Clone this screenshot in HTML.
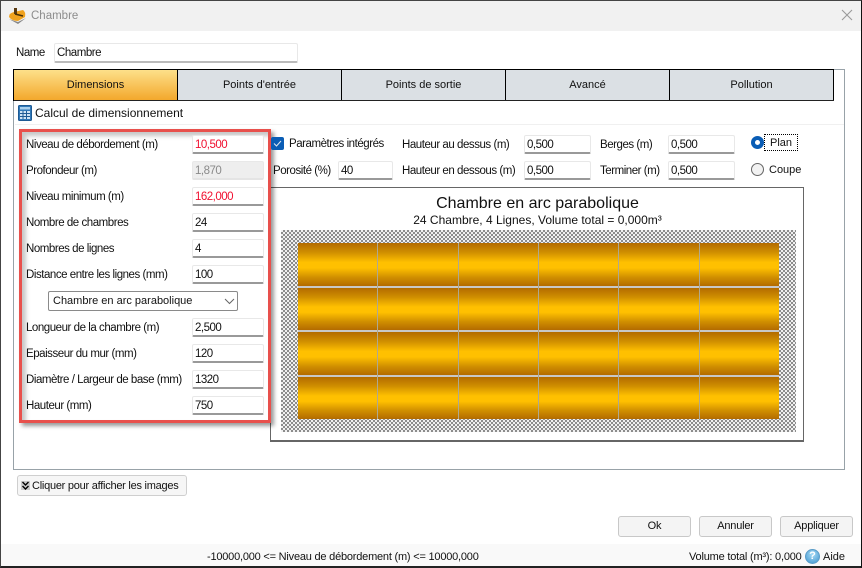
<!DOCTYPE html>
<html><head><meta charset="utf-8">
<style>
html,body{margin:0;padding:0;background:#fff;}
#w{position:relative;width:862px;height:568px;overflow:hidden;background:#fff;font-family:"Liberation Sans",sans-serif;font-size:11px;color:#111;}
#w div,#w span.a{position:absolute;box-sizing:border-box;white-space:nowrap;}
.l{height:16px;line-height:16px;font-size:11.5px;letter-spacing:-.46px;}
.i{width:72px;height:19px;background:#fff;border:1px solid #e8e8e8;border-bottom:2px solid #999;border-radius:2px;line-height:18px;padding-left:2px;font-size:11.5px;letter-spacing:-.5px;}
.r{color:#f01030;}
.t{top:70px;height:30px;border-right:1px solid #000;background:#dbe0e4;text-align:center;line-height:31px;}
.b{top:516px;width:73px;height:21px;background:#f4f4f4;border:1px solid #c8c8c8;border-radius:3px;text-align:center;line-height:19px;letter-spacing:-.2px;}
.bar{left:298px;width:481px;height:42.5px;background:linear-gradient(#b36b00 0%,#d08f00 22%,#ffc000 45%,#ffc000 58%,#d08f00 80%,#b36b00 100%);}
.s{width:1px;background:#b0a890;top:243px;height:176px;}
</style></head><body>
<div id="w">
<div style="left:0;top:0;width:862px;height:568px;border:1px solid #444;border-right:1px solid #111;border-bottom:2px solid #222;"></div>
<div style="left:1px;top:1px;width:860px;height:30px;background:#f1f1f1;"></div>
<svg style="position:absolute;left:8px;top:6px" width="20" height="20" viewBox="0 0 20 20"><path d="M1 13 L10 18 L18 12 L10 16Z" fill="#888"/><path d="M1 11 Q1 7 6 6 L15 4 Q18 6 17 11 L10 15 Q4 15 1 11Z" fill="#f0a21e"/><rect x="6" y="2" width="3" height="6" fill="#5a3a10"/><path d="M7 8 L15 10" stroke="#4a3208" stroke-width="1.5"/></svg>
<div class="l" style="left:31px;top:8px;color:#8c8c8c;font-size:11.5px;letter-spacing:0;line-height:17px;">Chambre</div>
<svg style="position:absolute;left:841px;top:9px" width="12" height="12" viewBox="0 0 12 12"><path d="M1 1 L11 11 M11 1 L1 11" stroke="#9a9a9a" stroke-width="1.1" fill="none"/></svg>

<div class="l" style="left:16px;top:45px;">Name</div>
<div style="left:54px;top:43px;width:244px;height:20px;border:1px solid #e8e8e8;border-bottom:2px solid #bbb;border-radius:2px;padding-left:2px;line-height:19px;font-size:11.5px;letter-spacing:-.46px;">Chambre</div>

<div style="left:13px;top:69px;width:832px;height:401px;border:1px solid #98a2a8;border-width:1px 1px 1px 1px;"></div>
<div style="left:13px;top:69px;width:821px;height:1px;background:#000;"></div>
<div style="left:13px;top:69px;width:1px;height:32px;background:#000;"></div>
<div style="left:14px;top:100px;width:820px;height:1px;background:#222;"></div>
<div class="t" style="left:14px;width:164px;background:linear-gradient(#fde08a,#f3a82c);">Dimensions</div>
<div class="t" style="left:178px;width:164px;">Points d'entrée</div>
<div class="t" style="left:342px;width:164px;">Points de sortie</div>
<div class="t" style="left:506px;width:164px;">Avancé</div>
<div class="t" style="left:670px;width:164px;">Pollution</div>

<svg style="position:absolute;left:18px;top:105px" width="14" height="16" viewBox="0 0 14 16"><rect x="0.5" y="0.5" width="13" height="15" rx="1" fill="#2f78b8" stroke="#1e5a94"/><rect x="2" y="2" width="10" height="2.5" fill="#a9d0ee"/><path d="M2 6h10v8H2z" fill="#cfe4f5"/><path d="M2 8.5h10M2 11.5h10M5 6v8M8.5 6v8" stroke="#1e5a94" stroke-width="1"/></svg>
<div class="l" style="left:35px;top:105px;font-size:12px;letter-spacing:0;">Calcul de dimensionnement</div>
<div style="left:15px;top:124px;width:829px;height:1px;background:#f0f0f0;"></div>

<!-- chart -->
<div style="left:270px;top:187px;width:534px;height:255px;border:1px solid #666;border-width:1px 1px 2px 1px;background:#fff;"></div>
<div style="left:271px;top:195px;width:533px;text-align:center;font-size:16px;line-height:18px;">Chambre en arc parabolique</div>
<div style="left:271px;top:213px;width:533px;text-align:center;font-size:12px;line-height:14px;">24 Chambre, 4 Lignes, Volume total = 0,000m³</div>
<div style="left:281px;top:230px;width:515px;height:202px;background:conic-gradient(#8c8c8c 25%,#f0f0f0 0 50%,#8c8c8c 0 75%,#f0f0f0 0) 0 0/4px 4px;"></div>
<div class="bar" style="top:243px;"></div>
<div class="bar" style="top:287.5px;"></div>
<div class="bar" style="top:332px;"></div>
<div class="bar" style="top:376.5px;"></div>
<div style="left:298px;top:285.5px;width:481px;height:2px;background:#c8c8c8;"></div>
<div style="left:298px;top:330px;width:481px;height:2px;background:#c8c8c8;"></div>
<div style="left:298px;top:374.5px;width:481px;height:2px;background:#c8c8c8;"></div>
<div class="s" style="left:377px;"></div>
<div class="s" style="left:458px;"></div>
<div class="s" style="left:538px;"></div>
<div class="s" style="left:618px;"></div>
<div class="s" style="left:699px;"></div>

<!-- red box -->
<div style="left:19px;top:129px;width:252px;height:294px;border:3px solid #e8504c;box-shadow:3px 3px 4px rgba(0,0,0,.4),inset 4px 4px 4px rgba(0,0,0,.22);"></div>

<div class="l" style="left:26px;top:137px;">Niveau de débordement (m)</div>
<div class="l" style="left:26px;top:163px;">Profondeur (m)</div>
<div class="l" style="left:26px;top:189px;">Niveau minimum (m)</div>
<div class="l" style="left:26px;top:215px;">Nombre de chambres</div>
<div class="l" style="left:26px;top:241px;">Nombres de lignes</div>
<div class="l" style="left:26px;top:267px;">Distance entre les lignes (mm)</div>
<div class="l" style="left:26px;top:320px;">Longueur de la chambre (m)</div>
<div class="l" style="left:26px;top:346px;">Epaisseur du mur (mm)</div>
<div class="l" style="left:26px;top:372px;">Diamètre / Largeur de base (mm)</div>
<div class="l" style="left:26px;top:398px;">Hauteur (mm)</div>

<div class="i r" style="left:192px;top:135px;">10,500</div>
<div class="i" style="left:192px;top:161px;background:#eee;color:#8a8a8a;border-bottom-color:#e4e4e4;">1,870</div>
<div class="i r" style="left:192px;top:187px;">162,000</div>
<div class="i" style="left:192px;top:213px;">24</div>
<div class="i" style="left:192px;top:239px;">4</div>
<div class="i" style="left:192px;top:265px;">100</div>
<div style="left:48px;top:291px;width:190px;height:20px;border:1px solid #8a8a8a;border-radius:2px;background:#fff;padding-left:4px;line-height:19px;font-size:11px;">Chambre en arc parabolique</div>
<svg style="position:absolute;left:224px;top:298px" width="11" height="7" viewBox="0 0 11 7"><path d="M1 1 L5.5 5.5 L10 1" stroke="#666" fill="none"/></svg>
<div class="i" style="left:192px;top:318px;">2,500</div>
<div class="i" style="left:192px;top:344px;">120</div>
<div class="i" style="left:192px;top:370px;">1320</div>
<div class="i" style="left:192px;top:396px;">750</div>

<!-- top params -->
<div style="left:271px;top:137px;width:13px;height:13px;background:#0a5db5;border-radius:2px;"></div>
<svg style="position:absolute;left:271px;top:137px" width="13" height="13" viewBox="0 0 13 13"><path d="M3 6.5 L5.5 9 L10 4" stroke="#dfe8f2" stroke-width="1" fill="none"/></svg>
<div class="l" style="left:289px;top:136px;">Paramètres intégrés</div>
<div class="l" style="left:273px;top:163px;">Porosité (%)</div>
<div class="i" style="left:338px;top:161px;width:55px;">40</div>
<div class="l" style="left:402px;top:137px;">Hauteur au dessus (m)</div>
<div class="l" style="left:402px;top:163px;">Hauteur en dessous (m)</div>
<div class="i" style="left:524px;top:135px;width:67px;">0,500</div>
<div class="i" style="left:524px;top:161px;width:67px;">0,500</div>
<div class="l" style="left:600px;top:137px;">Berges (m)</div>
<div class="l" style="left:600px;top:163px;">Terminer (m)</div>
<div class="i" style="left:668px;top:135px;width:67px;">0,500</div>
<div class="i" style="left:668px;top:161px;width:67px;">0,500</div>
<div style="left:751px;top:136px;width:13px;height:13px;border-radius:50%;background:#fff;border:4px solid #0a5db5;"></div>
<div style="left:764px;top:134px;width:34px;height:17px;border:1px dotted #000;line-height:16px;padding-left:5px;">Plan</div>
<div style="left:751px;top:163px;width:13px;height:13px;border-radius:50%;background:#f2f2f2;border:1px solid #666;"></div>
<div class="l" style="left:769px;top:162px;font-size:11px;letter-spacing:0;line-height:17px;">Coupe</div>

<!-- images button -->
<div style="left:17px;top:475px;width:170px;height:21px;background:#f6f6f6;border:1px solid #cfcfcf;border-radius:3px;line-height:21px;padding-left:14px;letter-spacing:-.25px;">Cliquer pour afficher les images</div>
<svg style="position:absolute;left:21px;top:481px" width="9" height="9" viewBox="0 0 9 9"><rect width="9" height="9" fill="#ccc"/><path d="M1.5 1 L4.5 4 L7.5 1 M1.5 5 L4.5 8 L7.5 5" stroke="#000" stroke-width="1.4" fill="none"/></svg>

<div class="b" style="left:618px;">Ok</div>
<div class="b" style="left:699px;">Annuler</div>
<div class="b" style="left:780px;">Appliquer</div>

<div style="left:1px;top:544px;width:860px;height:22px;background:#f9f9f9;"></div>
<div class="l" style="left:207px;top:549px;line-height:17px;font-size:11px;letter-spacing:-.21px;">-10000,000 &lt;= Niveau de débordement (m) &lt;= 10000,000</div>
<div class="l" style="left:689px;top:549px;line-height:17px;font-size:11px;letter-spacing:-.2px;">Volume total (m³): 0,000</div>
<div style="left:805px;top:549px;width:15px;height:15px;border-radius:50%;background:radial-gradient(circle at 50% 35%,#a9dcf5,#3d94cf);border:1px solid #5a9cc8;color:#fff;text-align:center;font-size:11px;font-weight:bold;line-height:13px;">?</div>
<div class="l" style="left:823px;top:549px;line-height:17px;font-size:11px;letter-spacing:0;">Aide</div>
</div>
</body></html>
